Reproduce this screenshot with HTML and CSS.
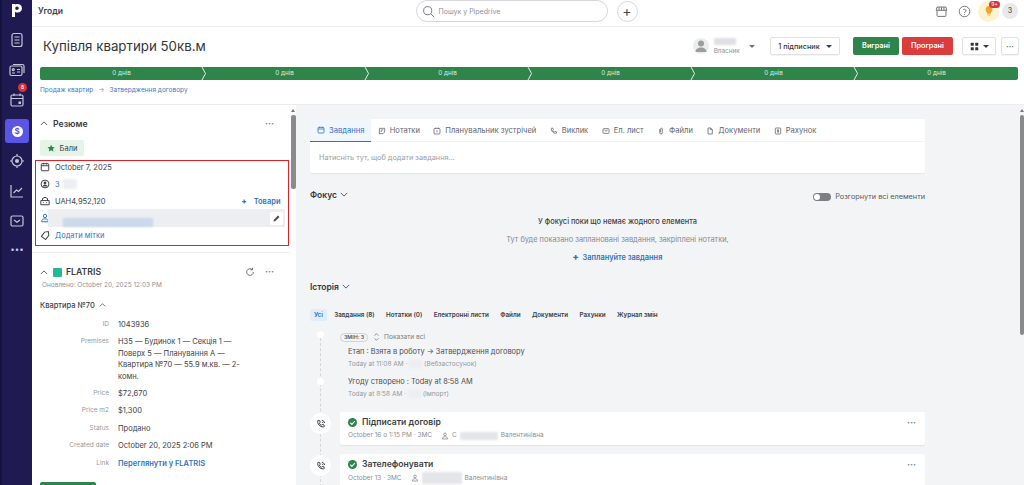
FILE: index.html
```html
<!DOCTYPE html>
<html lang="uk">
<head>
<meta charset="utf-8">
<title>Угоди</title>
<link rel="stylesheet" href="styles.css">
</head>
<body>
<div class="app">
  <nav class="rail">
    <div class="logo"><svg viewBox="0 0 10 13"><path fill-rule="evenodd" d="M0 0h3v.6A3.600 3.600 0 0 1 5.600 0C8.200 0 10 1.900 10 4.300S8.200 8.600 5.600 8.600A3.600 3.600 0 0 1 3 7.700V13H0zM5 2.500a1.800 1.800 0 1 0 0 3.600 1.800 1.800 0 0 0 0-3.600z"/></svg></div>
    <svg class="rail-i" viewBox="0 0 16 16"><rect x="3" y="1.500" width="10" height="13" rx="2"/><path d="M5.500 5h5M5.500 8h5M5.500 11h5"/></svg>
    <svg class="rail-i" viewBox="0 0 16 16"><rect x="1" y="4" width="12" height="9.500" rx="1.500"/><path d="M4 2.500h9.500a1.500 1.500 0 0 1 1.500 1.500v7"/><circle cx="4.300" cy="7.600" r="1"/><path d="M3 11h3M8 7.500h3M8 10h3"/></svg>
    <div class="rail-cal">
      <svg class="rail-i" viewBox="0 0 16 16"><rect x="2" y="3" width="12" height="11" rx="1.500"/><path d="M2 6.500h12M5 1.500V4M11 1.500V4"/><rect class="fill" x="9.500" y="9.500" width="2.500" height="2.500"/></svg>
      <span class="rail-badge">8</span>
    </div>
    <div class="rail-active"><span class="coin">$</span></div>
    <svg class="rail-i" viewBox="0 0 16 16"><circle cx="8" cy="8" r="5"/><circle class="fill" cx="8" cy="8" r="2"/><path d="M8 1v2M8 13v2M1 8h2M13 8h2"/></svg>
    <svg class="rail-i" viewBox="0 0 16 16"><path d="M2 2v12h12M4.500 10l3-3 2 1.500L13 5"/></svg>
    <svg class="rail-i" viewBox="0 0 16 16"><rect x="2" y="3" width="12" height="10" rx="1.500"/><path d="M5 7l3 2.200L11 7"/></svg>
    <div class="rail-more">•••</div>
  </nav>

  <div class="main">
    <header class="topbar">
      <div class="page-name">Угоди</div>
      <div class="top-center">
        <div class="search">
          <svg class="ico-search" viewBox="0 0 16 16"><circle cx="7" cy="7" r="5"/><path d="M11 11l4 4"/></svg>
          <span>Пошук у Pipedrive</span>
        </div>
        <div class="add">+</div>
      </div>
      <div class="top-right">
        <svg class="ico-top" viewBox="0 0 16 16"><path d="M2.500 6.500V13a1 1 0 0 0 1 1h9a1 1 0 0 0 1-1V6.500M1.500 6.500l1-4h11l1 4zM5 2.500v4M8 2.500v4M11 2.500v4"/></svg>
        <svg class="ico-top" viewBox="0 0 16 16"><circle cx="8" cy="8" r="6.500"/><path d="M6.200 6.200A1.900 1.900 0 1 1 8 9v.8M8 11.200v1"/></svg>
        <div class="bulb">
          <svg viewBox="0 0 16 16"><path class="bulb-f" d="M8 1.500a4.600 4.600 0 0 0-2.600 8.400V11.500h5.200V9.900A4.600 4.600 0 0 0 8 1.500zM6 12.500h4V14H6z"/></svg>
          <span class="bulb-badge">9+</span>
        </div>
        <div class="me">З</div>
      </div>
    </header>

    <section class="head">
      <div class="title-row">
        <h1>Купівля квартири 50кв.м</h1>
        <div class="actions">
          <div class="owner">
            <div class="avatar"><svg viewBox="0 0 16 16"><circle cx="8" cy="5.500" r="3"/><path d="M2.500 14c0-3 2.500-4.500 5.500-4.500s5.500 1.500 5.500 4.500z"/></svg></div>
            <div class="owner-text"><span class="smudge s-owner"></span><span>Власник</span></div>
            <span class="caret dark"></span>
          </div>
          <div class="btn btn-sub"><span>1 підписник</span><span class="caret"></span></div>
          <div class="btn-pair">
            <div class="btn-won">Виграні</div>
            <div class="btn-lost">Програні</div>
          </div>
          <div class="btn btn-view">
            <svg viewBox="0 0 12 12"><rect x="1" y="1" width="4" height="4" rx=".8"/><rect x="7" y="1" width="4" height="4" rx=".8"/><rect x="1" y="7" width="4" height="4" rx=".8"/><rect x="7" y="7" width="4" height="4" rx=".8"/></svg>
            <span class="caret"></span>
          </div>
          <div class="btn btn-dots">···</div>
        </div>
      </div>
      <div class="pipeline">
        <div class="stage">0 днів<svg class="notch" viewBox="0 0 6 13"><path d="M1 0l3.500 6.500L1 13"/></svg></div>
        <div class="stage">0 днів<svg class="notch" viewBox="0 0 6 13"><path d="M1 0l3.500 6.500L1 13"/></svg></div>
        <div class="stage">0 днів<svg class="notch" viewBox="0 0 6 13"><path d="M1 0l3.500 6.500L1 13"/></svg></div>
        <div class="stage">0 днів<svg class="notch" viewBox="0 0 6 13"><path d="M1 0l3.500 6.500L1 13"/></svg></div>
        <div class="stage">0 днів<svg class="notch" viewBox="0 0 6 13"><path d="M1 0l3.500 6.500L1 13"/></svg></div>
        <div class="stage">0 днів</div>
      </div>
      <div class="crumbs"><span>Продаж квартир</span><i>→</i><span>Затвердження договору</span></div>
    </section>

    <div class="content">
      <aside class="left">
        <div class="left-inner">
          <div class="sec-head">
            <svg class="chev" viewBox="0 0 10 6"><path d="M1 5l4-4 4 4"/></svg>
            <strong>Резюме</strong>
            <span class="dots">···</span>
          </div>
          <div class="chip-wrap">
            <div class="chip">
              <svg viewBox="0 0 12 12"><path d="M5.500 1l1.500 3 3.300.4-2.400 2.300.6 3.300-3-1.600-3 1.600.6-3.300L.7 4.400 4 4z"/></svg>
              <span>Бали</span>
            </div>
          </div>
          <div class="summary">
            <div class="s-row">
              <svg class="s-i" viewBox="0 0 12 12"><rect x="1.500" y="2" width="9" height="8.500" rx="1"/><path d="M1.500 4.500h9M4 1v2M8 1v2"/></svg>
              <span>October 7, 2025</span>
            </div>
            <div class="s-row">
              <svg class="s-i" viewBox="0 0 12 12"><circle cx="6" cy="6" r="4.700"/><circle class="fill" cx="6" cy="4.800" r="1.700"/><path class="fill" d="M3 9c.5-1.500 1.700-2 3-2s2.500.5 3 2z"/></svg>
              <a>3</a><span class="smudge s-org"></span>
            </div>
            <div class="s-row">
              <svg class="s-i" viewBox="0 0 12 12"><path d="M1 5.500h10v5H1zM3 5.500V3l3-1.500L9 3v2.500M3.500 8h1M7.500 8h1"/></svg>
              <span>UAH4,952,120</span>
              <a class="s-action"><b>+</b> Товари</a>
            </div>
            <div class="s-row s-person">
              <svg class="s-i blue" viewBox="0 0 12 12"><circle cx="6" cy="3.500" r="2"/><path d="M2 10.500c0-2.500 1.800-3.500 4-3.500s4 1 4 3.500z"/></svg>
              <div class="person-field">
                <span class="smudge s-name"></span>
                <span class="pencil"><svg viewBox="0 0 12 12"><path d="M2 10l.6-2.500L8 2.100l1.900 1.900L4.500 9.400z"/></svg></span>
              </div>
            </div>
            <div class="s-row">
              <svg class="s-i" viewBox="0 0 12 12"><path d="M1.500 7L6 2.500h4.500V7L6 11.500z" transform="rotate(-8 6 6)"/></svg>
              <a>Додати мітки</a>
            </div>
          </div>
          <div class="rule"></div>
          <div class="sec-head flat">
            <svg class="chev" viewBox="0 0 10 6"><path d="M1 5l4-4 4 4"/></svg>
            <span class="fl-logo"></span>
            <strong>FLATRIS</strong>
            <svg class="refresh" viewBox="0 0 12 12"><path d="M10 6a4 4 0 1 1-1.200-2.800M9 1v2.300H6.700"/></svg>
            <span class="dots">···</span>
          </div>
          <div class="updated">Оновлено: October 20, 2025 12:03 PM</div>
          <div class="apt">Квартира №70 <svg class="chev small" viewBox="0 0 10 6"><path d="M1 5l4-4 4 4"/></svg></div>
          <dl class="props">
            <dt>ID</dt><dd>1043936</dd>
            <dt>Premises</dt><dd>Н35 — Будинок 1 — Секція 1 — Поверх 5 — Планування А — Квартира №70 — 55.9 м.кв. — 2-комн.</dd>
            <dt>Price</dt><dd>$72,670</dd>
            <dt>Price m2</dt><dd>$1,300</dd>
            <dt>Status</dt><dd>Продано</dd>
            <dt>Created date</dt><dd>October 20, 2025 2:06 PM</dd>
            <dt>Link</dt><dd><a class="strong-link">Переглянути у FLATRIS</a></dd>
          </dl>
          <div class="green-stub"></div>
        </div>
        <div class="scrollbar short"><span class="arrow"></span><span class="thumb"></span></div>
      </aside>

      <main class="right">
        <div class="right-inner">
          <div class="composer">
            <div class="tabs">
              <div class="tab active"><svg viewBox="0 0 12 12"><rect x="1.500" y="2" width="9" height="8.500" rx="1.500"/><path d="M1.500 4.500h9M4 1v2M8 1v2"/></svg>Завдання</div>
              <div class="tab"><svg viewBox="0 0 12 12"><path d="M2 2h8v5.500L7.500 10H2zM4 4.500h4M4 6.500h2"/></svg>Нотатки</div>
              <div class="tab"><svg viewBox="0 0 12 12"><rect x="1.500" y="2" width="9" height="8.500" rx="1.500"/><path d="M4 1v2M8 1v2M6 5v3"/></svg>Планувальник зустрічей</div>
              <div class="tab"><svg viewBox="0 0 12 12"><path d="M2.500 1.500l2 .5.500 2-1 1c.5 1.300 1.200 2 2.500 2.500l1-1 2 .5.500 2c-.5.500-1 .5-1.500.5C5 9.500 2 6.500 2 3c0-.5 0-1 .5-1.500z"/></svg>Виклик</div>
              <div class="tab"><svg viewBox="0 0 12 12"><rect x="1.500" y="2.500" width="9" height="7" rx="1"/><path d="M3.500 4.500L6 6.300l2.500-1.800"/></svg>Ел. лист</div>
              <div class="tab"><svg viewBox="0 0 12 12"><path d="M4 3.500v5a2 2 0 0 0 4 0V3a1.300 1.300 0 0 0-2.600 0v5"/></svg>Файли</div>
              <div class="tab"><svg viewBox="0 0 12 12"><path d="M3 1.500h4l2.500 2.500v6.500H3zM7 1.500V4h2.500"/></svg>Документи</div>
              <div class="tab"><svg viewBox="0 0 12 12"><rect x="2" y="1.500" width="8" height="9" rx="1"/><path d="M6 3.500v5M7.200 4.500H5.500a.8.8 0 0 0 0 1.500h1a.8.8 0 0 1 0 1.500H4.800"/></svg>Рахунок</div>
            </div>
            <div class="composer-input">Натисніть тут, щоб додати завдання...</div>
          </div>

          <div class="focus-head">
            <div class="h-title">Фокус <svg class="chev down" viewBox="0 0 10 6"><path d="M1 1l4 4 4-4"/></svg></div>
            <div class="expand"><span class="toggle"></span>Розгорнути всі елементи</div>
          </div>
          <div class="empty">
            <div class="empty-t">У фокусі поки що немає жодного елемента</div>
            <div class="empty-s">Тут буде показано заплановані завдання, закріплені нотатки,</div>
            <a class="strong-link"><b>+</b>&nbsp; Заплануйте завдання</a>
          </div>

          <div class="h-title hist">Історія <svg class="chev down" viewBox="0 0 10 6"><path d="M1 1l4 4 4-4"/></svg></div>
          <div class="filters">
            <span class="f on">Усі</span><span class="f">Завдання (8)</span><span class="f">Нотатки (0)</span><span class="f">Електронні листи</span><span class="f">Файли</span><span class="f">Документи</span><span class="f">Рахунки</span><span class="f">Журнал змін</span>
          </div>

          <div class="timeline">
            <div class="t-row t-changes">
              <div class="t-mark"><span class="dot"></span></div>
              <div class="changes">
                <span class="pill">ЗМІН: 3</span>
                <svg class="updown" viewBox="0 0 10 12"><path d="M2 4l3-3 3 3M2 8l3 3 3-3"/></svg>
                <span>Показати всі</span>
              </div>
            </div>
            <div class="log log-a">
              <div class="log-t">Етап : Взята в роботу → Затвердження договору</div>
              <div class="log-s">Today at 11:08 AM · <span class="smudge s-a"></span> (Вебзастосунок)</div>
            </div>
            <div class="t-row t-log">
              <div class="t-mark"><span class="dot"></span></div>
              <div class="log">
                <div class="log-t">Угоду створено : Today at 8:58 AM</div>
                <div class="log-s">Today at 8:58 AM · <span class="smudge s-a"></span> (Імпорт)</div>
              </div>
            </div>
            <div class="t-row t-card">
              <div class="t-mark"><span class="circle"><svg viewBox="0 0 12 12"><path d="M2.500 1.500l2 .5.500 2-1 1c.5 1.300 1.200 2 2.500 2.500l1-1 2 .5.500 2c-.5.500-1 .5-1.500.5C5 9.500 2 6.500 2 3c0-.5 0-1 .5-1.500zM7 1.500c1.800.3 3 1.500 3.300 3.300M7 3.500c.8.200 1.300.7 1.500 1.500"/></svg></span></div>
              <div class="card">
                <div class="card-t"><span class="check"><svg viewBox="0 0 10 10"><path d="M2.500 5.200l1.800 1.800 3.300-3.600"/></svg></span>Підписати договір<span class="dots">···</span></div>
                <div class="card-s">October 16 о 1:15 PM · ЗМС <svg class="u" viewBox="0 0 12 12"><circle cx="6" cy="3.500" r="2"/><path d="M2 10.500c0-2.500 1.800-3.500 4-3.500s4 1 4 3.500z"/></svg> С<span class="smudge s-c"></span> Валентинівна</div>
              </div>
            </div>
            <div class="t-row t-card">
              <div class="t-mark"><span class="circle"><svg viewBox="0 0 12 12"><path d="M2.500 1.500l2 .5.500 2-1 1c.5 1.300 1.200 2 2.500 2.500l1-1 2 .5.500 2c-.5.500-1 .5-1.500.5C5 9.500 2 6.500 2 3c0-.5 0-1 .5-1.500zM7 1.500c1.800.3 3 1.500 3.300 3.300M7 3.500c.8.200 1.300.7 1.500 1.500"/></svg></span></div>
              <div class="card">
                <div class="card-t"><span class="check"><svg viewBox="0 0 10 10"><path d="M2.500 5.200l1.800 1.800 3.300-3.600"/></svg></span>Зателефонувати<span class="dots">···</span></div>
                <div class="card-s">October 13 · ЗМС <svg class="u" viewBox="0 0 12 12"><circle cx="6" cy="3.500" r="2"/><path d="M2 10.500c0-2.500 1.800-3.500 4-3.500s4 1 4 3.500z"/></svg> <span class="smudge s-d"></span> Валентинівна</div>
              </div>
            </div>
          </div>
        </div>
        <div class="scrollbar long"><span class="arrow"></span><span class="thumb"></span></div>
      </main>
    </div>
  </div>
</div>
</body>
</html>
```
FILE: styles.css
```css
* { box-sizing: border-box; }
html, body { margin: 0; height: 100%; overflow: hidden; }
body { font-family: Inter, "Liberation Sans", sans-serif; font-size: 7.5px; color: #3c4148; background: #fff; }
svg { fill: none; stroke: currentColor; stroke-width: 1.200; display: block; flex: none; }
svg .fill { fill: currentColor; stroke: none; }
a { color: #2f74c0; }
dl, dd, dt, h1 { margin: 0; }

.app { display: flex; height: 485px; }

/* rail */
.rail { width: 32px; flex: none; background: #1f1b52; border-left: 2px solid #15123c; display: flex; flex-direction: column; align-items: center; color: #c6c6d6; }
.logo { height: 32px; padding-top: 4px; }
.logo svg { width: 10px; height: 13px; fill: #fff; stroke: none; }
.rail-i { width: 16px; height: 16px; margin-bottom: 14px; }
.rail-cal { position: relative; height: 16px; margin-bottom: 11px; }
.rail-badge { position: absolute; top: -9px; left: 9px; width: 9px; height: 9px; border-radius: 50%; background: #d8333a; color: #fff; font-size: 5px; line-height: 9px; text-align: center; }
.rail-active { width: 24px; height: 24px; background: #5b55e6; border-radius: 3px; display: flex; align-items: center; justify-content: center; margin-bottom: 10px; }
.coin { width: 11px; height: 11px; border-radius: 50%; background: #fff; color: #5b55e6; font-size: 8px; font-weight: 700; line-height: 11px; text-align: center; }
.rail-more { font-size: 8px; line-height: 10px; margin-top: 1px; }

/* main */
.main { flex: 1; min-width: 0; display: flex; flex-direction: column; }

.topbar { height: 27px; flex: none; display: grid; grid-template-columns: 1fr auto 1fr; align-items: center; border-bottom: 1px solid #ebecee; padding: 0 6px 4px 6px; }
.page-name { font-size: 8.500px; font-weight: 600; color: #3b3f45; }
.top-center { display: flex; align-items: center; gap: 9px; margin-left: -3px; }
.search { width: 192px; height: 22px; border: 1px solid #d5d7da; border-radius: 11px; display: flex; align-items: center; gap: 4px; padding: 0 5px; color: #8b8f96; font-size: 7px; }
.ico-search { width: 13px; height: 13px; color: #70747b; }
.add { width: 21px; height: 21px; border: 1px solid #d5d7da; border-radius: 50%; text-align: center; font-size: 14px; line-height: 18px; color: #44484e; }
.top-right { display: flex; align-items: center; justify-content: flex-end; gap: 10px; }
.ico-top { width: 13px; height: 13px; color: #6f7379; }
.bulb { position: relative; width: 21px; height: 21px; border-radius: 50%; background: #fdf3d2; display: flex; align-items: center; justify-content: center; margin-left: -3px; margin-right: -7px; }
.bulb svg { width: 12px; height: 12px; }
.bulb-f { fill: #efa62a; stroke: none; }
.bulb-badge { position: absolute; top: 0; right: -1px; width: 11px; height: 7px; background: #d8333a; color: #fff; border-radius: 4px; font-size: 5px; line-height: 7px; text-align: center; }
.me { width: 16px; height: 16px; border-radius: 50%; background: #e8e9eb; color: #55595f; font-size: 7px; font-weight: 500; line-height: 16px; text-align: center; }

.head { height: 78px; flex: none; padding: 0 6px 0 8px; border-bottom: 1px solid #ededef; }
.title-row { height: 40px; display: flex; align-items: center; justify-content: space-between; padding: 0 0 2px 3px; }
h1 { font-size: 13.300px; font-weight: 400; color: #32363c; }
.actions { display: flex; align-items: center; gap: 9px; margin-right: -1px; }
.owner { display: flex; align-items: center; gap: 4px; width: 62px; margin-right: 6px; }
.avatar { width: 16px; height: 16px; border-radius: 50%; background: #eceded; color: #9a9da2; overflow: hidden; }
.avatar svg { width: 16px; height: 16px; fill: currentColor; stroke: none; }
.owner-text { display: flex; flex-direction: column; align-items: flex-start; color: #8d9197; font-size: 6.400px; gap: 2px; width: 28px; margin-left: 1px; }
.caret { width: 0; height: 0; border: 3px solid transparent; border-top: 3.500px solid #3a3e44; border-bottom: 0; display: inline-block; flex: none; }
.caret.dark { border-top-color: #6f7379; margin-left: 4px; }
.btn { height: 18px; border: 1px solid #dfe1e4; border-radius: 2px; display: flex; align-items: center; justify-content: center; gap: 6px; font-size: 7.300px; font-weight: 500; color: #34383e; background: #fff; box-shadow: 0 1px 1px rgba(0,0,0,.05); }
.btn-sub { width: 70px; margin-right: 4px; }
.btn-pair { display: flex; gap: 3px; }
.btn-won, .btn-lost { height: 18px; border-radius: 2px; color: #fff; font-size: 7.300px; font-weight: 600; text-align: center; line-height: 18px; }
.btn-won { width: 46px; background: #2f844a; }
.btn-lost { width: 51px; background: #dc3c3c; }
.btn-view { width: 34px; gap: 4px; }
.btn-view svg { width: 9px; height: 9px; fill: #33373c; stroke: none; }
.btn-dots { width: 18px; margin-left: -4px; color: #666a70; font-size: 9px; }

.pipeline { display: grid; grid-template-columns: repeat(6, 1fr); height: 13px; }
.stage { position: relative; background: #2f844a; color: #dcece1; font-size: 6.300px; line-height: 13px; text-align: center; }
.stage:first-child { border-radius: 2px 0 0 2px; }
.stage:last-child { border-radius: 0 2px 2px 0; }
.notch { position: absolute; right: -4px; top: 0; width: 6px; height: 13px; color: #e4f0e8; stroke-width: 1; z-index: 1; }
.crumbs { display: flex; gap: 5px; padding-top: 6px; font-size: 6.500px; color: #3b79bd; }
.crumbs i { font-style: normal; color: #8d9197; }

.content { flex: 1; min-height: 0; display: flex; }

/* left */
.left { width: 264px; flex: none; display: flex; background: #fff; overflow: hidden; }
.left-inner { flex: 1; min-width: 0; padding-left: 8px; }
.scrollbar { width: 6px; flex: none; display: flex; flex-direction: column; align-items: center; }
.scrollbar .thumb { width: 5px; background: #8a8a8c; border-radius: 2px; }
.short .thumb { height: 74px; }
.arrow { width: 0; height: 0; margin: 4px 0 3px; border: 2px solid transparent; border-top: 0; border-bottom: 3px solid #777; }
.sec-head { display: flex; align-items: center; gap: 5px; padding: 8px 16px 0 0; height: 29px; font-size: 8.700px; color: #3a3e44; }
.sec-head strong { font-weight: 600; }
.sec-head .dots { margin-left: auto; }
.chev { width: 8px; height: 5px; color: #55595f; }
.chev.small { width: 7px; height: 4px; display: inline-block; margin-left: 2px; vertical-align: 1px; }
.chev.down { display: inline-block; margin-left: 1px; vertical-align: 1px; }
.dots { color: #7b7f85; font-size: 9px; font-weight: 700; line-height: 8px; }
.chip-wrap { padding-top: 6px; height: 26px; }
.chip { display: inline-flex; width: 44px; height: 16px; background: #e4f4e6; border-radius: 2px; align-items: center; justify-content: center; gap: 4px; color: #3a3e44; font-size: 7.500px; }
.chip svg { width: 9px; height: 9px; fill: #2f844a; stroke: none; }

.summary { border: 1.500px solid #e02228; margin: 0 1px 0 -5px; height: 85.500px; padding: 0 3.500px 0 4px; font-size: 7.500px; display: flex; flex-direction: column; gap: 5px; }
.s-row { display: flex; align-items: center; gap: 5px; height: 12px; flex: none; }
.s-i { width: 10px; height: 10px; color: #3f4349; }
.s-i.blue { color: #2f74c0; }
.s-row a { color: #2f74c0; }
.s-row a.s-action { margin: 0 4px 0 auto; font-weight: 600; }
.s-action b { margin-right: 5px; }
.s-person { height: 18px; margin: -3px 0; gap: 0; }
.person-field { flex: 1; height: 18px; margin-left: -2.500px; padding-right: 2px; background: #eceef1; display: flex; align-items: center; }
.smudge { display: inline-block; background: #eceef1; border-radius: 1px; vertical-align: middle; filter: blur(.8px); }
.s-owner { width: 22px; height: 7px; background: #dfe0e3; }
.s-org { width: 14px; height: 10px; margin-left: -2px; }
.s-name { width: 90px; height: 9px; background: #cbd9ea; margin: 8px 0 0 15px; }
.s-a { width: 13px; height: 8px; }
.s-c { width: 38px; height: 8px; background: #e4e5e8; }
.s-d { width: 40px; height: 12px; background: #e4e5e8; }
.pencil { margin-left: auto; width: 13px; height: 13px; background: #fff; border-radius: 2px; display: flex; align-items: center; justify-content: center; color: #44484e; }
.pencil svg { width: 9px; height: 9px; fill: currentColor; stroke: none; }

.rule { height: 1px; background: #eceded; margin: 6.500px 0 0 -8px; }
.flat { padding-top: 10px; height: 28px; gap: 4px; }
.fl-logo { width: 9px; height: 9px; background: #24b894; border-radius: 1px; }
.refresh { width: 10px; height: 10px; margin-left: auto; color: #6b6f75; }
.sec-head.flat .refresh + .dots { margin-left: 6px; }
.flat .chev { margin-right: 1px; }
.updated { padding-left: 2px; font-size: 6.500px; color: #8d9197; height: 17px; }
.apt { font-size: 7.500px; font-weight: 500; height: 16px; padding-top: 2.500px; }
.props { display: grid; grid-template-columns: 69px 1fr; column-gap: 9px; row-gap: 6px; line-height: 11.400px; font-size: 7.500px; padding-right: 48px; margin-top: 5px; }
.props dt { text-align: right; color: #94989e; font-size: 6.500px; }
.strong-link { color: #2f74c0; font-weight: 600; }
.green-stub { width: 56px; height: 20px; background: #2f844a; border-radius: 2px; margin-top: 12.500px; }

/* right */
.right { flex: 1; min-width: 0; background: #f3f4f6; display: flex; overflow: hidden; }
.right-inner { flex: 1; min-width: 0; padding: 14px 95px 0 14px; }
.long { width: 4px; }
.long .thumb { height: 220px; width: 3.500px; }
.composer { background: #fff; height: 54px; border-radius: 2px; box-shadow: 0 1px 1px rgba(0,0,0,.06); }
.tabs { display: flex; height: 23px; border-bottom: 1px solid #f1f2f3; font-size: 7.600px; color: #63676d; }
.tab { display: flex; align-items: center; gap: 4px; padding: 0 6.700px; height: 23px; white-space: nowrap; }
.tab svg { width: 8px; height: 8px; }
.tab.active { width: 61px; padding: 0 7px; background: #f1f6fc; color: #2f74c0; border-bottom: 1px solid #2f74c0; }
.composer-input { padding: 11px 9px; color: #9a9ea4; font-size: 7.300px; }

.focus-head { display: flex; justify-content: space-between; align-items: center; height: 21px; margin-top: 11px; }
.h-title { font-size: 8.500px; font-weight: 600; color: #33373d; }
.expand { display: flex; align-items: center; gap: 4px; font-size: 7.300px; color: #55595f; padding-top: 4px; }
.toggle { width: 18px; height: 8px; background: #7b7e83; border-radius: 4px; position: relative; display: block; }
.toggle::before { content: ""; position: absolute; left: 1px; top: 1px; width: 6px; height: 6px; border-radius: 50%; background: #fff; }
.empty { display: flex; flex-direction: column; align-items: center; text-align: center; font-size: 7.400px; padding-top: 11px; line-height: 11px; height: 77px; }
.empty-t { font-weight: 500; color: #3c4148; }
.empty-s { color: #85898f; padding-top: 7px; }
.empty a { padding-top: 7px; font-size: 7.400px; }
.empty a b { font-size: 9px; line-height: 8px; }
.hist { height: 15px; }
.filters { display: flex; align-items: center; margin-top: 12px; font-size: 6.300px; font-weight: 600; color: #3c4148; }
.f { padding: 0 5.700px; line-height: 12px; }
.f:first-child { padding: 0 4px; margin-right: 1.500px; }
.f.on { background: #e1edfa; color: #2f74c0; border-radius: 2px; }

.timeline { position: relative; padding-top: 9.500px; }
.timeline::before { content: ""; position: absolute; left: 10px; top: 12px; bottom: 0; border-left: 1px dashed #d4d6da; }
.t-row { display: grid; grid-template-columns: 30px 1fr; position: relative; }
.t-mark { display: flex; justify-content: center; padding-right: 9px; }
.dot { width: 7px; height: 7px; border-radius: 50%; background: #fff; display: block; }
.changes { display: flex; align-items: center; gap: 4px; height: 12px; font-size: 6.600px; color: #7b7f85; padding-top: 1px; }
.pill { border: 1px solid #d0d2d6; border-radius: 6px; padding: 0 3px; font-size: 5.300px; font-weight: 600; color: #55595f; line-height: 7px; background: #f3f4f6; }
.updown { width: 7px; height: 8px; margin-left: 1px; }
.log-a { padding: 3px 0 0 38px; height: 35px; }
.log-t { font-size: 7.400px; color: #4a4e54; line-height: 12px; }
.log-s { font-size: 6.500px; color: #94989e; line-height: 12px; }
.t-log { height: 29px; }
.t-log .log { padding-left: 8px; margin-top: -1.500px; }
.t-card { margin-top: 9px; }
.t-card:nth-child(4) { margin-top: 5.500px; }
.circle { width: 21px; height: 21px; margin-top: 1px; border-radius: 50%; background: #fff; display: flex; align-items: center; justify-content: center; color: #3c4148; }
.circle svg { width: 10px; height: 10px; }
.card { background: #fff; height: 33px; border-radius: 2px; box-shadow: 0 1px 1px rgba(0,0,0,.07); padding: 4px 9px 0 8px; }
.card-t { display: flex; align-items: center; gap: 5px; font-size: 8.600px; font-weight: 600; color: #3a3e44; line-height: 13px; }
.card-t .dots { margin-left: auto; }
.check { width: 9px; height: 9px; border-radius: 50%; background: #2f844a; color: #fff; }
.check svg { width: 9px; height: 9px; stroke-width: 1.300; }
.card-s { display: flex; align-items: center; gap: 3px; font-size: 6.500px; color: #8a8e94; padding-top: 1px; line-height: 11px; }
.u { width: 8px; height: 8px; margin-left: 6px; }
```
